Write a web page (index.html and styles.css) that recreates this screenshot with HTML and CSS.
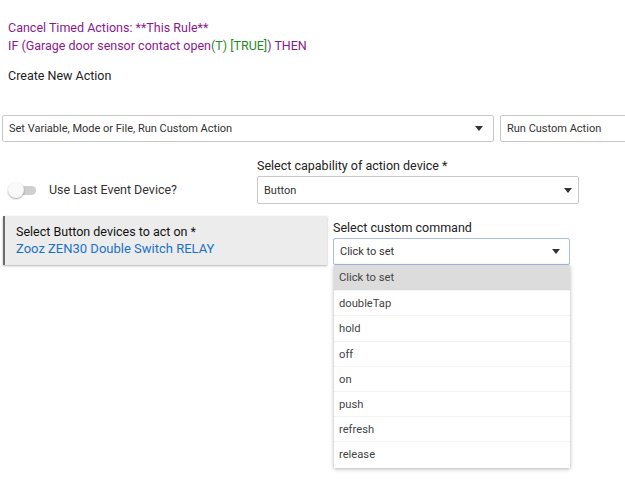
FILE: index.html
```html
<!DOCTYPE html>
<html>
<head>
<meta charset="utf-8">
<link rel="stylesheet" href="styles.css">
</head>
<body>
<div class="page">
  <div class="header">
    <div class="purple">Cancel Timed Actions: **This Rule**</div>
    <div class="purple">IF (Garage door sensor contact open<span class="green">(T) [TRUE]</span>) THEN</div>
    <div class="title">Create New Action</div>
  </div>

  <div class="row1">
    <div class="select wide">
      <span>Set Variable, Mode or File, Run Custom Action</span>
      <span class="arrow"></span>
    </div>
    <div class="select side">
      <span>Run Custom Action</span>
    </div>
  </div>

  <div class="row2">
    <div class="toggle-col">
      <div class="toggle"><span class="track"></span><span class="knob"></span></div>
      <span class="toggle-label">Use Last Event Device?</span>
    </div>
    <div class="field cap">
      <div class="label">Select capability of action device *</div>
      <div class="select">
        <span>Button</span>
        <span class="arrow"></span>
      </div>
    </div>
  </div>

  <div class="row3">
    <div class="devbox">
      <div class="devtitle">Select Button devices to act on *</div>
      <div class="devlink">Zooz ZEN30 Double Switch RELAY</div>
    </div>
    <div class="field cmd">
      <div class="label">Select custom command</div>
      <div class="dd-wrap">
        <div class="select focused">
          <span>Click to set</span>
          <span class="arrow"></span>
        </div>
        <ul class="menu">
          <li class="active">Click to set</li>
          <li>doubleTap</li>
          <li>hold</li>
          <li>off</li>
          <li>on</li>
          <li>push</li>
          <li>refresh</li>
          <li>release</li>
        </ul>
      </div>
    </div>
  </div>
</div>
</body>
</html>
```

FILE: styles.css
```css
html, body {
  margin: 0;
  padding: 0;
  background: #fff;
  overflow: hidden;
}
body {
  font-family: Roboto, "Liberation Sans", sans-serif;
  color: #222;
  width: 625px;
  height: 500px;
}
.page {
  width: 625px;
}
.header {
  padding: 19px 8px 0;
  font-size: 12.5px;
  line-height: 18px;
}
.purple { color: #8a1a8a; }
.green { color: #1f8a1f; }
.title {
  margin-top: 12px;
  color: #222;
}

.select {
  box-sizing: border-box;
  display: flex;
  align-items: center;
  justify-content: space-between;
  border: 1px solid #c9c9c9;
  border-radius: 2px;
  background: #fff;
  font-size: 11px;
  color: #333;
  padding: 0 6px;
  white-space: nowrap;
}
.arrow {
  width: 0;
  height: 0;
  border-left: 4.5px solid transparent;
  border-right: 4.5px solid transparent;
  border-top: 5px solid #333;
  margin-right: 2px;
}

.row1 {
  display: flex;
  gap: 6px;
  margin-top: 30px;
  padding-left: 2px;
  overflow: hidden;
}
.row1 .select { height: 27px; }
.wide { width: 492px; flex-shrink: 0; }
.wide .arrow { margin-right: 4px; }
.side { width: 160px; flex-shrink: 0; }

.row2 {
  display: flex;
  margin-top: 16px;
}
.toggle-col {
  width: 257px;
  flex-shrink: 0;
  display: flex;
  align-items: center;
  align-self: flex-end;
  height: 28px;
  padding-left: 8px;
  box-sizing: border-box;
}
.toggle {
  position: relative;
  width: 28px;
  height: 16px;
}
.track {
  position: absolute;
  left: 3px;
  top: 4px;
  width: 25px;
  height: 9px;
  border-radius: 5px;
  background: #cfcfcf;
}
.knob {
  position: absolute;
  left: 0;
  top: 0;
  width: 16px;
  height: 16px;
  border-radius: 50%;
  background: #fafafa;
  box-shadow: 0 1px 2px rgba(0,0,0,.35);
}
.toggle-label {
  font-size: 12.5px;
  color: #333;
  margin-left: 13px;
  padding-bottom: 1px;
}
.label {
  font-size: 12.5px;
  line-height: 16px;
  color: #222;
  margin-bottom: 2px;
}
.cap { width: 322px; }
.cap .select { height: 28px; }
.cap .arrow { margin-right: 0; }

.row3 {
  display: flex;
  gap: 6px;
  margin-top: 12px;
  padding-left: 3px;
}
.devbox {
  box-sizing: border-box;
  width: 324px;
  height: 49px;
  flex-shrink: 0;
  background: #ececec;
  border-left: 2px solid #6b6b6b;
  box-shadow: 0 1px 2px rgba(0,0,0,.3);
  padding: 7px 0 0 11px;
  line-height: 17px;
}
.devtitle { color: #111; font-size: 12.5px; }
.devlink { color: #1a72c7; font-size: 13px; }
.cmd {
  width: 237px;
  padding-top: 4px;
}
.dd-wrap { position: relative; }
.focused {
  height: 27px;
  border-color: #a8bde6;
}
.focused .arrow { margin-right: 3px; }
.menu {
  position: absolute;
  left: 1px;
  top: 27px;
  width: 236px;
  margin: 0;
  padding: 0 0 1px;
  list-style: none;
  background: #fff;
  box-shadow: 0 1px 4px rgba(0,0,0,.3);
  font-size: 11.2px;
  color: #444;
}
.menu li {
  height: 25.2px;
  line-height: 25px;
  padding-left: 5px;
  border-top: 1px solid #f3f3f3;
  box-sizing: border-box;
}
.menu li:first-child { border-top: 0; }
.menu li.active { background: #dcdcdc; }
```
